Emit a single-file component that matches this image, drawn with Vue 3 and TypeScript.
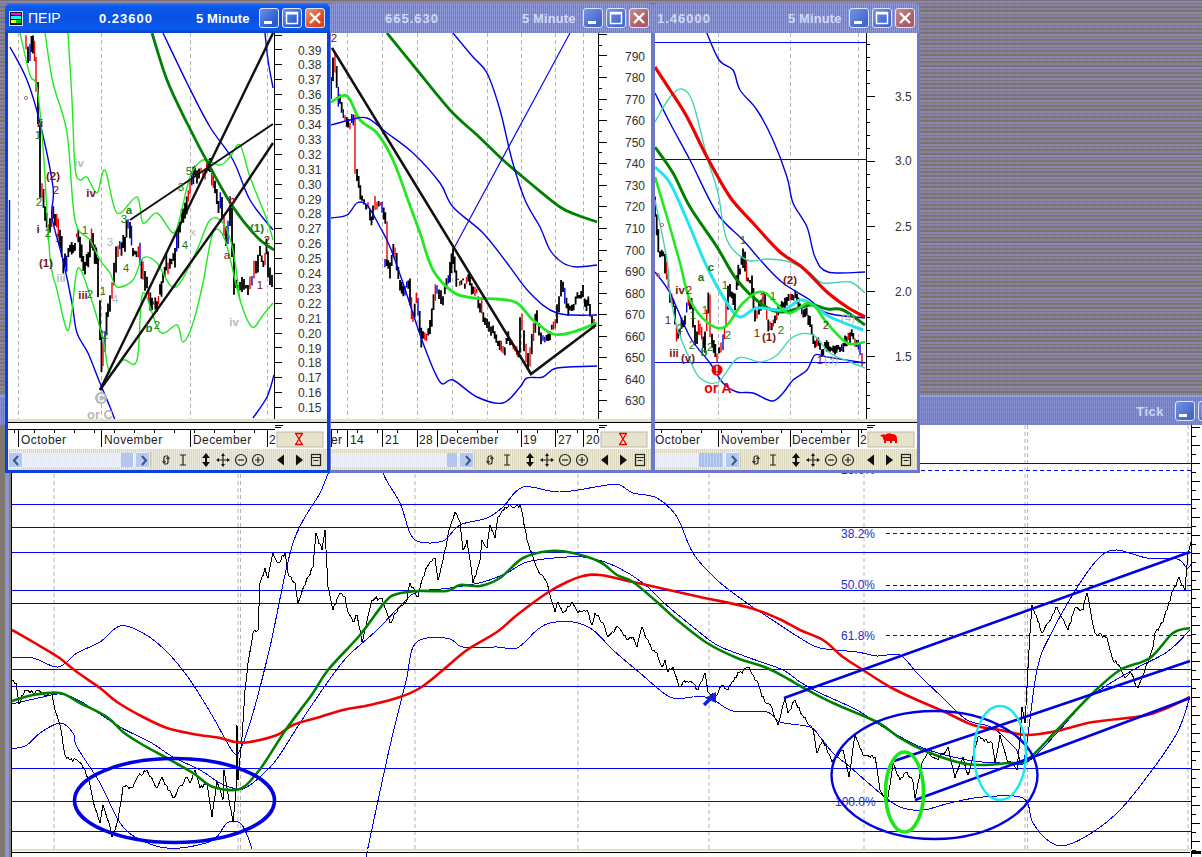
<script setup lang="ts">
type Pt = [number, number]
interface Curve { d: string; c: string; w: number }
interface Label { x: number; y: number; t: string; k: string }
interface Date2 { x: number; t: string; tx: number }
interface Tick { y: number; len: number }
interface AxisLabel { y: number; t: string }
interface Win {
  id: string; left: number; inner: number; axis: number; labelX: number; name: string; price: string
  curves: Curve[]; vgrid: number[]; hlines: number[]; ticks: Tick[]; labels: AxisLabel[]; dates: Date2[]
  texts: Label[]; candles: { black: string; red: string; blue: string }; rings: { x: number; y: number }[]
  boxX: number; badge: string; hasLeft: boolean; blobs: { x: number; y: number; r: number; c: string; t: string }[]
}

const parse = (s: string): Pt[] => s.trim().split(/\s+/).map(p => { const [a, b] = p.split(',').map(Number); return [a, b] as Pt })

function curve(s: string): string {
  const p = parse(s)
  let d = `M${p[0][0]} ${p[0][1]}`
  for (let i = 0; i < p.length - 1; i++) {
    const a = p[Math.max(i - 1, 0)], b = p[i], c = p[i + 1], e = p[Math.min(i + 2, p.length - 1)]
    const c1x = b[0] + (c[0] - a[0]) / 6, c1y = b[1] + (c[1] - a[1]) / 6
    const c2x = c[0] - (e[0] - b[0]) / 6, c2y = c[1] - (e[1] - b[1]) / 6
    d += `C${c1x.toFixed(1)} ${c1y.toFixed(1)} ${c2x.toFixed(1)} ${c2y.toFixed(1)} ${c[0]} ${c[1]}`
  }
  return d
}

function rng(seed: number) {
  let s = seed
  return () => { s = (s * 1664525 + 1013904223) % 4294967296; return s / 4294967296 }
}

function jag(s: string, step: number, amp: number): string {
  const p = parse(s), r = rng(7)
  let d = `M${p[0][0]} ${p[0][1]}`
  for (let i = 0; i < p.length - 1; i++) {
    const [x0, y0] = p[i], [x1, y1] = p[i + 1]
    const n = Math.max(1, Math.round(Math.abs(x1 - x0) / step))
    for (let k = 1; k <= n; k++) {
      const t = k / n
      const o = k === n ? 0 : (r() - 0.5) * amp * 2
      d += `L${(x0 + (x1 - x0) * t).toFixed(1)} ${(y0 + (y1 - y0) * t + o).toFixed(1)}`
    }
  }
  return d
}

function candleSet(s: string, step: number, range: number, seed: number) {
  const p = parse(s), r = rng(seed)
  let black = '', red = '', blue = ''
  for (let i = 0; i < p.length - 1; i++) {
    const [x0, y0] = p[i], [x1, y1] = p[i + 1]
    const n = Math.max(1, Math.round(Math.abs(x1 - x0) / step))
    for (let k = 0; k < n; k++) {
      const t = k / n
      const x = (x0 + (x1 - x0) * t).toFixed(1)
      const j = (r() - 0.5) * range * 1.6
      const y = y0 + (y1 - y0) * t + j
      const nextY = y0 + (y1 - y0) * ((k + 1) / n) + j
      const top = Math.min(y, nextY) - r() * range
      const bot = Math.max(y, nextY) + r() * range
      const seg = `M${x} ${top.toFixed(1)}V${bot.toFixed(1)}`
      const q = r()
      if (q < 0.2) red += seg
      else if (q < 0.3) blue += seg
      else black += seg
    }
  }
  return { black, red, blue }
}

const lbl = (s: string): Label[] =>
  s.trim().split(';').map(e => {
    const [xy, t, k] = e.trim().split('|')
    const [x, y] = xy.split(',').map(Number)
    return { x, y, t, k }
  })

const DG = '#008000', LG = '#22e822', BL = '#0000e8', RD = '#f00000', CY = '#22e4f0', TL = '#44d4b4'

const w1: Win = {
  id: 'w1', left: 8, inner: 319, axis: 274, labelX: 298, name: 'ΠΕΙΡ', price: '0.23600', hasLeft: true,
  boxX: 277, badge: 'hour',
  vgrid: [18.5, 101.5, 190.5, 267.5], hlines: [],
  ticks: Array.from({ length: 26 }, (_, i) => ({ y: 35 + i * 14.9, len: 8 })),
  labels: Array.from({ length: 25 }, (_, i) => ({ y: 50 + i * 14.9, t: (0.39 - i * 0.01).toFixed(2) })),
  dates: [{ x: 18.5, t: 'October', tx: 21 }, { x: 101.5, t: 'November', tx: 104 }, { x: 190.5, t: 'December', tx: 193 }, { x: 267.5, t: '2', tx: 269 }],
  curves: [
    { c: BL, w: 1.4, d: curve('10,47 27,80 40,123 53,187 52,217 63,260 72,303 77,333 88,353 100,383 110,407 115,420') },
    { c: BL, w: 1.4, d: curve('163,33 187,83 210,127 233,160 250,200 273,230') },
    { c: BL, w: 1.4, d: curve('265,33 268,60 273,88') },
    { c: BL, w: 1.4, d: curve('253,418 267,397 274,375') },
    { c: BL, w: 1.4, d: 'M9.5 200V250' },
    { c: LG, w: 1.4, d: curve('45,33 53,83 67,133 75,220 90,240 100,260 110,273 117,287 133,280 143,258 157,263 170,285 180,283 197,250 210,220 223,223 233,250 240,300') },
    { c: LG, w: 1.4, d: curve('68,33 72,100 75,167 80,180 87,177 97,193 105,170 117,213 137,197 143,223 157,213 173,233 180,217 190,177 203,160 220,165 230,157 240,145 250,177 267,220 273,240') },
    { c: LG, w: 1.4, d: curve('20,33 30,75 37,87 43,147 50,257 57,290 67,330 72,310 78,268 90,295 103,340 110,373 123,360 137,360 143,293 160,332 177,325 183,342 193,323 203,283 213,233 225,240 240,300 252,327 263,315 273,303') },
    { c: DG, w: 2.8, d: curve('152,33 167,80 187,123 210,167 233,207 257,237 274,250') },
    { c: '#111', w: 2.4, d: 'M100 390L273 33' },
    { c: '#111', w: 2.4, d: 'M100 390L233 203L273 143' },
    { c: '#111', w: 2, d: 'M130 220L273 124' },
  ],
  candles: candleSet('26,40 30,60 33,40 36,60 40,120 42,190 45,205 50,235 55,215 60,235 65,265 70,250 75,245 80,235 85,270 90,255 93,230 98,265 100,300 103,370 105,350 108,315 112,295 118,250 125,245 128,225 130,225 133,245 140,250 143,268 147,285 152,300 157,305 160,295 163,285 168,265 175,260 180,225 185,215 190,190 195,170 205,175 210,165 215,190 222,205 228,240 232,210 236,290 238,285 242,290 250,285 258,265 260,255 265,260 268,250 272,280 274,285', 2, 7, 11),
  rings: [{ x: 26, y: 98 }],
  blobs: [{ x: 101, y: 398, r: 6, c: '#b8b8b8', t: 'C' }],
  texts: lbl('40,127|ii|mb;38,139|1|g;53,180|(2)|mb;39,206|2|g;79,167|iv|sb;91,197|iv|mb;56,194|2|m;38,233|i|mb;48,237|2|g;58,242|1|m;46,267|(1)|mb;61,282|iii|sb;83,299|iii|mb;90,298|2|g;103,295|1|g;85,234|1|g;110,246|3|s;124,223|3|g;129,214|a|gb;126,272|4|g;115,303|4|s;185,249|4|g;105,339|2|g;149,332|b|gb;157,329|2|g;193,236|x|s;189,175|5|g;181,191|3|g;257,232|(1)|gb;267,244|2|m;227,259|a|m;260,289|1|m;234,326|iv|sb;232,204|b|mb;100,419|or C|sb2'),
}

const w2: Win = {
  id: 'w2', left: 331, inner: 320, axis: 598, labelX: 625, name: '', price: '665.630', hasLeft: false,
  boxX: 601, badge: 'hour',
  vgrid: [347.5, 382.5, 417.5, 452.5, 487.5, 521.5, 555.5, 583.5], hlines: [],
  ticks: Array.from({ length: 36 }, (_, i) => ({ y: 34.4 + i * 10.78, len: i % 2 === 0 ? 9 : 4 })).filter(t => t.y < 420),
  labels: Array.from({ length: 17 }, (_, i) => ({ y: 56 + i * 21.56, t: String(790 - i * 10) })),
  dates: [{ x: 347.5, t: '14', tx: 350 }, { x: 382.5, t: '21', tx: 385 }, { x: 417.5, t: '28', tx: 419 }, { x: 437.5, t: 'December', tx: 440 }, { x: 521.5, t: '19', tx: 523 }, { x: 555.5, t: '27', tx: 558 }, { x: 583.5, t: '20', tx: 586 }, { x: 331, t: 'er', tx: 331 }],
  curves: [
    { c: DG, w: 2.8, d: curve('387,33 413,65 450,110 477,135 503,160 530,183 560,207 577,215 597,222') },
    { c: LG, w: 2.8, d: curve('331,102 347,96 360,120 377,133 393,160 408,200 420,233 433,270 453,292 473,298 497,299 517,303 533,320 553,334 573,332 597,323') },
    { c: BL, w: 1.4, d: curve('453,33 473,57 487,73 500,110 512,160 525,200 540,227 550,250 563,263 577,267 597,265') },
    { c: BL, w: 1.4, d: curve('331,125 350,120 367,118 387,133 413,153 440,183 453,207 483,233 507,263 530,293 557,313 597,315') },
    { c: BL, w: 1.4, d: curve('331,218 347,215 357,203 367,205 380,227 390,247 403,283 423,343 440,382 453,380 477,397 503,403 520,387 527,378 543,377 557,368 597,366') },
    { c: BL, w: 1.1, d: 'M453 250L570 33' },
    { c: '#111', w: 2.6, d: 'M332 48L531 374L596 325' },
  ],
  candles: candleSet('331,100 335,60 340,100 345,115 350,125 355,115 357,170 362,195 370,210 373,220 377,200 382,205 387,225 385,260 390,270 395,250 400,280 405,295 410,280 413,320 418,300 423,340 430,330 437,287 443,300 450,280 453,253 458,283 470,280 480,300 485,317 493,330 503,350 510,337 520,353 522,320 530,367 537,315 543,340 550,337 557,320 563,283 570,313 583,293 590,307 596,328', 1.8, 5, 21),
  rings: [], blobs: [],
  texts: lbl('334,42|2|m'),
}

const w3: Win = {
  id: 'w3', left: 655, inner: 262, axis: 866, labelX: 895, name: '', price: '1.46000', hasLeft: false,
  boxX: 868, badge: 'sheep',
  vgrid: [718.5, 790.5, 858.5], hlines: [42, 159, 362],
  ticks: Array.from({ length: 31 }, (_, i) => ({ y: 31 + i * 13, len: i % 5 === 0 ? 9 : 4 })),
  labels: [96, 160, 226, 291, 356].map((y, i) => ({ y, t: (3.5 - i * 0.5).toFixed(1) })),
  dates: [{ x: 654.5, t: 'October', tx: 655 }, { x: 718.5, t: 'November', tx: 721 }, { x: 790.5, t: 'December', tx: 792 }, { x: 858.5, t: '2', tx: 860 }],
  curves: [
    { c: BL, w: 1.4, d: curve('706,31 719,60 733,70 740,90 757,110 773,140 787,177 793,203 807,227 815,257 828,272 865,272') },
    { c: BL, w: 1.4, d: curve('655,93 670,123 690,160 717,213 743,240 763,263 783,283 810,300 827,313 865,318') },
    { c: BL, w: 1.4, d: curve('655,272 670,293 690,337 710,363 723,383 737,392 753,393 772,401 783,393 793,380 807,370 815,355 827,357 865,363') },
    { c: TL, w: 1.4, d: curve('655,122 670,97 682,89 693,103 707,157 718,193 727,240 747,260 767,259 790,262 810,273 823,283 850,282 865,293') },
    { c: TL, w: 1.4, d: curve('655,200 667,260 670,293 677,327 690,360 700,378 718,382 738,358 760,362 777,355 793,337 813,335 830,353 850,362 865,368') },
    { c: RD, w: 3.2, d: curve('655,67 670,90 687,117 707,157 730,197 753,223 780,252 803,268 827,292 847,307 865,317') },
    { c: DG, w: 3, d: curve('655,147 673,173 690,207 717,247 737,280 763,305 783,312 810,305 827,309 843,310 865,325') },
    { c: CY, w: 3, d: curve('655,167 670,183 687,220 707,267 727,303 740,317 757,308 783,310 800,300 813,305 830,317 863,330') },
    { c: LG, w: 2.6, d: curve('655,177 667,217 680,263 690,300 708,323 725,327 743,303 763,292 788,313 810,303 827,323 847,343 865,342') },
  ],
  candles: candleSet('655,200 660,250 665,255 670,290 675,310 678,340 685,320 690,300 693,310 697,340 700,325 705,345 710,300 712,340 717,355 723,345 726,325 730,290 735,305 740,270 743,265 745,250 748,280 752,280 755,310 757,320 765,300 770,330 775,325 780,310 785,305 792,295 797,295 800,305 805,310 810,320 815,340 820,345 825,352 830,345 835,350 840,345 845,345 850,335 855,340 860,345 864,360', 1.8, 5, 33),
  rings: [{ x: 662, y: 225 }, { x: 658, y: 275 }],
  blobs: [{ x: 717, y: 370, r: 5.5, c: '#f00000', t: '!' }],
  texts: lbl('689,294|2|m;680,294|iv|mb;668,324|1|m;680,332|2|g;674,357|iii|mb;688,362|(v)|mb;692,349|2|g;704,356|b|gb;710,351|2|g;701,281|a|gb;711,271|c|gb;693,319|1|g;705,314|1|g;725,289|1|g;743,244|1|g;763,301|2|m;773,300|1|g;757,337|1|m;769,341|(1)|mb;781,334|2|g;790,284|(2)|mb;826,329|2|m;848,322|(4)|s;820,364|1|m;831,364|(3)|s;728,339|2|g;718,393|or A|rb'),
}

const wins: Win[] = [w2, w3, w1]

const mainH = [463, 504, 527, 552, 590, 603, 669, 686, 768, 801, 831]
const mainDash = [470, 533, 584.5, 635]
const mainGrid = [54, 238, 240.5, 415, 578, 709, 864, 1025, 1027.5, 1188]
const mainPct = [
  { x: 841, y: 474, t: '23.6%' }, { x: 841, y: 538, t: '38.2%' }, { x: 841, y: 589, t: '50.0%' },
  { x: 841, y: 640, t: '61.8%' }, { x: 835, y: 806, t: '100.0%' },
]
const mainThin = [
  curve('12,658 33,658 58,667 77,653 100,642 120,626 143,633 167,652 190,680 213,717 233,752 240,750 253,713 270,647 293,543 320,493 330,470 355,430'),
  curve('372,430 383,473 400,503 410,533 420,542 443,541 460,525 487,518 503,507 523,487 560,492 607,485 620,485 633,493 657,498 677,517 693,553 717,580 747,603 777,623 800,638 820,648 857,652 877,656 900,655 917,673 943,698 967,720 993,728 1015,748 1024,760 1037,670 1053,630 1080,583 1100,557 1117,550 1147,558 1177,559 1187,568 1192,563'),
  curve('12,704 43,697 60,694 80,701 120,727 150,742 173,757 200,770 220,783 237,789 247,787 262,775 277,759 300,723 327,683 347,657 377,630 403,603 417,592 450,588 483,582 507,573 527,562 567,557 590,558 617,567 643,583 663,602 693,627 717,645 747,657 783,670 800,682 820,693 857,710 883,727 923,748 967,760 1000,763 1027,762 1057,733 1090,697 1133,670 1167,652 1190,630'),
  curve('12,749 27,745 40,733 60,723 73,733 77,747 100,783 123,827 153,845 180,848 213,840 227,823 240,823 248,837 252,850'),
  curve('366,857 387,759 402,697 407,677 413,647 427,638 450,639 463,647 497,647 517,648 537,630 550,623 573,622 593,630 613,650 640,673 670,697 693,697 710,698 733,711 767,712 780,722 810,727 820,737 833,753 850,767 880,793 900,807 923,810 950,803 983,797 1023,798 1033,823 1050,842 1067,845 1093,832 1120,810 1150,773 1177,733 1190,697'),
]
const mainPrice = jag('12,680 16,683 19,704 25,690 30,693 38,690 44,695 52,693 55,710 60,725 65,755 70,760 77,760 85,770 90,785 95,808 100,823 103,805 110,827 112,837 118,820 123,787 133,787 137,778 147,770 157,788 162,777 173,798 187,777 190,783 195,770 200,788 207,783 212,817 217,782 223,800 224,770 233,822 236,790 237,725 238,780 242,737 245,690 248,663 253,633 258,630 260,583 265,568 268,578 273,553 278,563 285,553 288,573 295,583 298,603 305,585 313,567 316,533 322,550 325,530 328,587 333,610 340,593 345,597 348,612 353,622 357,615 362,642 372,600 382,598 390,623 400,607 407,600 410,583 418,597 423,577 427,567 435,558 438,580 443,560 450,527 455,512 460,522 463,550 467,540 473,583 480,560 482,540 487,548 490,525 495,538 498,517 505,507 520,505 523,517 527,540 533,557 538,570 547,583 555,612 558,602 563,613 572,602 578,613 587,610 592,625 595,613 603,623 608,637 618,627 628,640 633,637 637,647 642,627 652,650 657,653 662,667 665,660 668,672 673,667 679,687 683,682 693,683 698,690 705,673 708,692 715,697 723,685 728,690 735,677 748,667 758,683 762,697 772,708 778,725 785,698 788,713 795,700 802,715 813,730 817,753 823,740 832,762 843,750 849,777 855,735 863,755 875,757 880,790 887,805 893,763 900,780 907,772 913,782 915,798 922,763 928,752 938,760 948,747 955,778 963,757 968,775 978,737 992,743 995,763 1000,735 1007,760 1017,770 1020,740 1022,707 1025,723 1030,633 1032,605 1042,633 1057,607 1068,630 1075,608 1083,610 1087,593 1095,633 1107,638 1113,660 1120,667 1125,678 1130,672 1138,688 1145,670 1153,647 1155,633 1163,622 1173,590 1179,577 1185,590 1188,553 1192,538', 1.5, 2)
const mainRed = curve('12,630 33,642 58,657 77,672 100,688 117,702 143,717 167,728 193,734 220,738 235,742 250,742 277,735 293,725 320,717 343,710 370,705 400,697 420,688 443,670 467,650 497,632 517,615 547,593 567,582 583,576 600,575 633,582 660,588 700,597 747,607 777,618 800,630 823,640 843,657 863,670 890,687 917,700 943,711 973,725 1000,730 1027,735 1057,731 1093,722 1143,716 1167,708 1190,697')
const mainGreen = curve('12,701 33,695 60,693 80,703 107,717 123,732 143,745 167,758 193,773 213,787 240,789 257,773 267,759 287,728 313,693 328,670 360,635 385,602 397,594 419,591 447,591 460,585 480,586 500,578 523,558 550,551 573,553 600,562 617,575 633,582 657,602 677,620 707,643 737,658 767,668 790,680 800,686 833,703 877,722 900,738 923,750 957,762 980,765 1007,763 1027,760 1057,730 1093,693 1120,670 1150,658 1173,633 1190,628')
const mainTicks = Array.from({ length: 48 }, (_, i) => ({ y: 427 + i * 9, len: i % 2 === 0 ? 9 : 5 }))
const lineD = (xs: number[], a: number, b: number) => xs.map(x => `M${x} ${a}V${b}`).join('')
const hlineD = (ys: number[], a: number, b: number) => ys.map(y => `M${a} ${y + 0.5}H${b}`).join('')
const dateTicks = (w: Win) => {
  const a: number[] = []
  for (let x = w.left + 6; x < w.axis; x += 20) a.push(Math.floor(x) + 0.5)
  return lineD(a, 429, 433)
}
const toolIcons = ['cycle', 'ibeam', 'updown', 'move', 'minus', 'plus', 'left', 'right', 'doc']
</script>

<template>
  <main class="desk">
    <section class="big">
      <header class="big-title">
        <span class="tick-name">Tick</span>
        <span class="btn blue dim"><svg viewBox="0 0 20 20" width="20" height="20"><rect x="4" y="13" width="8" height="3" fill="#fff" /></svg></span>
        <span class="btn blue dim"><svg viewBox="0 0 20 20" width="20" height="20"><rect x="4.5" y="4.5" width="11" height="11" fill="none" stroke="#fff" stroke-width="1.5" /></svg></span>
      </header>
      <div class="big-body">
        <div class="strip"></div>
        <svg class="big-chart" viewBox="12 425 1190 432" width="1190" height="432">
          <path :d="lineD(mainGrid, 425, 852)" class="grid" />
          <path :d="hlineD(mainH, 12, 1191)" class="h" />
          <path :d="hlineD(mainDash, 886, 1191)" class="hd" />
          <text v-for="p in mainPct" :key="p.t" :x="p.x" :y="p.y" class="pct">{{ p.t }}</text>
          <path v-for="(d, i) in mainThin" :key="i" :d="d" class="thin" />
          <path :d="mainPrice" class="price" />
          <path :d="mainRed" class="ma red" />
          <path :d="mainGreen" class="ma green" />
          <path d="M784 698L1190 552" class="chan" />
          <path d="M894 761L1025 717L1190 661" class="chan" />
          <path d="M915 800L1033 757L1190 698" class="chan" />
          <ellipse cx="174.5" cy="800.5" rx="100" ry="42" class="ring r-blue" />
          <ellipse cx="934.5" cy="775" rx="103" ry="64" class="ring r-blue2" />
          <ellipse cx="904.5" cy="792" rx="19" ry="40" class="ring r-green" />
          <ellipse cx="1000" cy="753" rx="26" ry="47" class="ring r-cyan" />
          <path d="M704 705L711 698" class="arrow-stem" />
          <polygon points="716,692 716,703 705,698" class="arrow-head" />
          <path d="M1191.5 425V857" class="axis" />
          <path v-for="t in mainTicks" :key="t.y" :d="`M1191 ${t.y}h${t.len}`" class="axis" />
          <rect x="12" y="849" width="1180" height="2" class="pale" />
          <path d="M12 852.5H1190" class="axis" />
          <path d="M1191 852.5h10" class="axis2" />
        </svg>
      </div>
    </section>

    <section v-for="w in wins" :key="w.id" class="win" :class="w.id">
      <header class="title">
        <svg v-if="w.name" class="app-ico" viewBox="0 0 14 15" width="14" height="15">
          <rect x="0.5" y="0.5" width="13" height="14" fill="#111" stroke="#ddd" />
          <rect x="2" y="2" width="10" height="2" fill="#f0f" />
          <rect x="2" y="5" width="10" height="3" fill="#0ff" />
          <rect x="2" y="9" width="5" height="3" fill="#ff0" />
          <rect x="7" y="9" width="5" height="3" fill="#0c0" />
        </svg>
        <span v-if="w.name" class="name">{{ w.name }}</span>
        <span class="val">{{ w.price }}</span>
        <span class="mins">5 Minute</span>
        <span class="btns">
          <span class="btn blue"><svg viewBox="0 0 20 20" width="20" height="20"><rect x="5" y="13" width="8" height="3" fill="#fff" /></svg></span>
          <span class="btn blue"><svg viewBox="0 0 20 20" width="20" height="20"><rect x="4.5" y="4.5" width="11" height="11" fill="none" stroke="#fff" stroke-width="1.5" /><path d="M4 5.5h12" stroke="#fff" stroke-width="2" /></svg></span>
          <span class="btn close"><svg viewBox="0 0 20 20" width="20" height="20"><path d="M5 5l10 10M15 5L5 15" stroke="#fff" stroke-width="2.4" /></svg></span>
        </span>
      </header>
      <div class="client">
        <svg class="chart" :viewBox="`${w.left} 33 ${w.inner} 416`" :width="w.inner" height="416">
          <defs>
            <clipPath :id="`clip-${w.id}`"><rect :x="w.left" y="33" :width="w.axis - w.left" height="387" /></clipPath>
          </defs>
          <g :clip-path="`url(#clip-${w.id})`">
            <path :d="lineD(w.vgrid, 33, 420)" class="grid" />
            <path :d="hlineD(w.hlines, w.left, w.axis)" class="h" />
            <path :d="w.candles.black" class="c-black" />
            <path :d="w.candles.blue" class="c-blue" />
            <path :d="w.candles.red" class="c-red" />
            <path v-for="(c, i) in w.curves" :key="i" :d="c.d" fill="none" :stroke="c.c" :stroke-width="c.w" />
            <circle v-for="(r, i) in w.rings" :key="i" :cx="r.x" :cy="r.y" r="1.6" class="small-ring" />
            <g v-for="(b, i) in w.blobs" :key="i">
              <circle :cx="b.x" :cy="b.y" :r="b.r" :fill="b.c" />
              <text :x="b.x" :y="b.y + 3.5" class="blob-t">{{ b.t }}</text>
            </g>
            <text v-for="(t, i) in w.texts" :key="i" :x="t.x" :y="t.y" class="lab" :class="t.k">{{ t.t }}</text>
          </g>
          <path :d="`M${w.axis + 0.5} 33V420`" class="axis" />
          <path v-for="t in w.ticks" :key="t.y" :d="`M${w.axis} ${t.y}h${t.len}`" class="axis" />
          <text v-for="l in w.labels" :key="l.t" :x="w.labelX" :y="l.y + 4.5" class="ax-l">{{ l.t }}</text>
          <rect :x="w.left" y="419" :width="w.inner" height="3" class="pale" />
          <path :d="`M${w.left} 422.5H${w.left + w.inner}`" class="axis" />
          <path :d="`M${w.left} 429.5H${w.axis + 1}`" class="axis" />
          <path :d="`M${w.axis + 1} 425.5h8M${w.axis + 1} 427.5h6`" class="axis" />
          <path :d="dateTicks(w)" class="axis" />
          <path :d="lineD(w.dates.map(d => d.x), 429, 447)" class="axis" />
          <text v-for="d in w.dates" :key="d.t" :x="d.tx" y="444" class="date">{{ d.t }}</text>
          <rect :x="w.boxX" y="432" width="46" height="15" class="badge" />
          <g v-if="w.badge === 'hour'" :transform="`translate(${w.boxX + 22} 433)`">
            <path d="M-4 .5H4M-4 11.5H4M-3 1L3 11M3 1L-3 11" class="hourglass" />
          </g>
          <g v-else :transform="`translate(${w.boxX + 20} 433)`">
            <path d="M-8 3Q-5 0-3 2Q0-1 4 1Q9 1 9 6V10H7V8L4 8V10H2V8H-2V10H-4V7Q-6 6-5 4Z" class="sheep" />
          </g>
        </svg>
        <div class="toolbar">
          <div class="scroll">
            <span v-if="w.hasLeft" class="sbtn"><svg viewBox="0 0 15 15" width="15" height="15"><path d="M9 3L5 7.5L9 12" class="chev" /></svg></span>
            <span class="track"><span class="thumb"></span></span>
            <span class="sbtn"><svg viewBox="0 0 15 15" width="15" height="15"><path d="M6 3L10 7.5L6 12" class="chev" /></svg></span>
          </div>
          <div class="tools">
            <span v-for="t in toolIcons" :key="t" class="tool" :class="`t-${t}`">
              <svg viewBox="0 0 16 16" width="16" height="16">
                <g v-if="t === 'cycle'" class="ico-line"><path d="M10 4H7.5Q6 4 6 6V10" /><path d="M6 12H8.5Q10 12 10 10V6" /><path d="M4.5 9L6 11L7.5 9M8.5 7L10 5L11.5 7" /></g>
                <path v-else-if="t === 'ibeam'" d="M5 3H11M5 13H11M8 3V13" class="ico-line" />
                <g v-else-if="t === 'updown'"><polygon points="8,1 12,6 4,6" /><polygon points="8,15 12,10 4,10" /><rect x="7" y="5" width="2" height="6" /></g>
                <g v-else-if="t === 'move'"><path d="M8 3V13M3 8H13" class="ico-line" /><polygon points="8,1 10,4 6,4" /><polygon points="8,15 10,12 6,12" /><polygon points="1,8 4,6 4,10" /><polygon points="15,8 12,6 12,10" /></g>
                <g v-else-if="t === 'minus'" class="ico-line"><circle cx="8" cy="8" r="5.5" /><path d="M5 8H11" /></g>
                <g v-else-if="t === 'plus'" class="ico-line"><circle cx="8" cy="8" r="5.5" /><path d="M5 8H11M8 5V11" /></g>
                <polygon v-else-if="t === 'left'" points="4,8 11,2.5 11,13.5" />
                <polygon v-else-if="t === 'right'" points="12,8 5,2.5 5,13.5" />
                <g v-else class="ico-line"><rect x="3.5" y="2.5" width="9" height="11" /><path d="M3.5 5.5H12.5M5.5 8.5H10.5" /></g>
              </svg>
            </span>
          </div>
        </div>
      </div>
    </section>
  </main>
</template>

<style scoped>
.desk {
  position: relative;
  width: 1202px;
  height: 857px;
  overflow: hidden;
  font-family: "Liberation Sans", Arial, sans-serif;
  background:
    repeating-linear-gradient(90deg, rgba(150, 130, 190, .4) 0 1px, rgba(125, 135, 70, .4) 1px 2px),
    repeating-linear-gradient(0deg, #868686 0 2px, #6e7248 2px 4px, #86829c 4px 6px, #74724e 6px 7px, #8e8ea0 7px 9px, #6c6c4c 9px 11px);
}
.big { position: absolute; left: 0; top: 395px; width: 1202px; height: 462px; display: flex; flex-direction: column; }
.big-title {
  height: 30px; display: flex; align-items: center; justify-content: flex-end; gap: 3px; padding-right: 0; margin-right: -16px;
  border-top: 2px solid #8e9ce0; box-sizing: border-box;
  background:
    repeating-linear-gradient(90deg, rgba(150, 160, 220, .5) 0 1px, rgba(110, 120, 170, .5) 1px 2px),
    repeating-linear-gradient(0deg, #6f7bc2 0 2px, #8289c4 2px 3px, #7480c8 3px 5px);
}
.tick-name { color: #d0d6f2; font-size: 13px; font-weight: 700; margin-right: 8px; letter-spacing: .5px; }
.big-body { flex: 1; display: flex; min-height: 0; }
.strip {
  flex: none; border-right: 1px solid #000; box-sizing: border-box; width: 12px;
  background: linear-gradient(90deg, #80786e 0 5px, #8a96cc 5px 9px, #8a8270 9px 11px);
}
.big-chart { background: #fff; display: block; flex: none; }
.grid { stroke: #b4b4b4; stroke-width: 1; stroke-dasharray: 4 3; fill: none; }
.h { stroke: #0000ee; stroke-width: 1; fill: none; shape-rendering: crispEdges; }
.hd { stroke: #0000ee; stroke-width: 1; stroke-dasharray: 4 3; fill: none; shape-rendering: crispEdges; }
.pct { fill: #2030d0; font-size: 12px; }
.thin { fill: none; stroke: #0000ee; stroke-width: 1; shape-rendering: crispEdges; }
.price { fill: none; stroke: #000; stroke-width: 1; shape-rendering: crispEdges; }
.ma { fill: none; stroke-width: 2.6; }
.red { stroke: #f00000; }
.green { stroke: #008000; }
.chan { fill: none; stroke: #0000e0; stroke-width: 2.6; }
.ring { fill: none; }
.r-blue { stroke: #0000e0; stroke-width: 3.6; }
.r-blue2 { stroke: #0000e0; stroke-width: 2.4; }
.r-green { stroke: #18e818; stroke-width: 3.6; }
.r-cyan { stroke: #18e8f0; stroke-width: 2.4; }
.arrow-stem { stroke: #1020e0; stroke-width: 3.5; fill: none; }
.arrow-head { fill: #1020e0; }
.axis { stroke: #000; stroke-width: 1; fill: none; shape-rendering: crispEdges; }
.axis2 { stroke: #000; stroke-width: 3; fill: none; shape-rendering: crispEdges; }
.pale { fill: #e4e0c4; }

.win { position: absolute; top: 3px; height: 470px; box-sizing: border-box; display: flex; flex-direction: column; border: 3px solid #6c78cc; border-top: 0; border-radius: 7px 7px 0 0; }
.w1 { left: 5px; width: 325px; z-index: 4; border-color: #0a3fe0; }
.w2 { left: 328px; width: 326px; z-index: 2; }
.w3 { left: 652px; width: 268px; z-index: 3; }
.title {
  height: 30px; flex: none; display: flex; align-items: center; margin: 0 -3px; padding: 0 5px 0 4px; box-sizing: border-box;
  border-radius: 7px 7px 0 0; color: #d2d8f4; font-size: 13px; font-weight: 700; letter-spacing: 1px;
  background:
    repeating-linear-gradient(90deg, rgba(165, 175, 230, .5) 0 1px, rgba(105, 115, 175, .5) 1px 2px),
    repeating-linear-gradient(0deg, #7482cc 0 2px, #8a90c8 2px 3px, #7a88d4 3px 5px);
}
.w1 .title { color: #fff; background: linear-gradient(#2a78f4, #0a58ea 12%, #0a50e2 55%, #0a5cf0 85%, #0840c8); }
.app-ico { flex: none; }
.name { margin-left: 5px; width: 26px; font-weight: 400; font-size: 14px; letter-spacing: 0; white-space: nowrap; }
.mins { letter-spacing: .1px; }
.w1 .val { margin-left: 45px; }
.w1 .mins { margin-left: 43px; }
.w2 .val { margin-left: 53px; }
.w2 .mins { margin-left: 83px; }
.w3 .val { margin-left: 1px; }
.w3 .mins { margin-left: 77px; }
.btns { margin-left: auto; display: flex; gap: 3px; }
.btn { width: 20px; height: 20px; display: block; border-radius: 3px; box-sizing: border-box; outline: 1px solid #dfe6f8; outline-offset: -1px; overflow: hidden; }
.btn svg { display: block; }
.blue { background: linear-gradient(135deg, #6f95ea, #2a58d0 75%); }
.close { background: linear-gradient(135deg, #f09a7a, #d8451e 70%); }
.w2 .blue, .w3 .blue, .dim { background: linear-gradient(135deg, #7898e4, #4468cc 75%); }
.w2 .close, .w3 .close { background: linear-gradient(135deg, #c89090, #a85c66 70%); }
.client { flex: 1; background: #fff; display: flex; flex-direction: column; min-height: 0; }
.chart { display: block; flex: none; }
.c-black { stroke: #000; stroke-width: 1.8; fill: none; }
.c-blue { stroke: #0000e0; stroke-width: 1.4; fill: none; }
.c-red { stroke: #f00000; stroke-width: 1.4; fill: none; }
.small-ring { fill: none; stroke: #b06a7a; stroke-width: 1; }
.blob-t { fill: #fff; font-size: 10px; font-weight: 700; text-anchor: middle; }
.lab { font-size: 11.5px; text-anchor: middle; }
.m { fill: #7a1616; }
.mb { fill: #7a1616; font-weight: 700; }
.g { fill: #1a7a1a; }
.gb { fill: #1a7a1a; font-weight: 700; }
.s { fill: #b8b8b8; }
.sb { fill: #b8b8b8; font-weight: 700; }
.sb2 { fill: #b8b8b8; font-weight: 700; font-size: 13px; }
.rb { fill: #f00000; font-weight: 700; font-size: 14px; }
.ax-l { fill: #333; font-size: 12px; }
.date { fill: #222; font-size: 12px; letter-spacing: .4px; }
.badge { fill: #e6e2cc; stroke: #bdb9a4; stroke-width: 1; }
.hourglass { stroke: #f00000; stroke-width: 1.4; fill: none; }
.sheep { fill: #f00000; }
.toolbar {
  height: 21px; flex: none; display: flex; align-items: center;
  background:
    repeating-linear-gradient(90deg, rgba(255, 255, 255, .35) 0 1px, rgba(200, 195, 160, .35) 1px 2px),
    #e6e2cc;
}
.scroll { flex: 1; min-width: 0; height: 16px; display: flex; align-items: center; }
.sbtn { width: 15px; height: 16px; flex: none; background: #b4c8f0; border: 1px solid #e8eefc; box-sizing: border-box; border-radius: 2px; display: block; overflow: hidden; }
.sbtn svg { display: block; }
.chev { fill: none; stroke: #3a5488; stroke-width: 2; }
.track {
  flex: 1; height: 14px; display: flex; justify-content: flex-end; padding-right: 2px;
  background: repeating-linear-gradient(90deg, #f4f2e8 0 1px, #e6eaf6 1px 2px);
}
.thumb { width: 12px; background: #b4c6ee; border-radius: 1px; }
.w2 .thumb { width: 10px; }
.w3 .thumb { width: 24px; background: repeating-linear-gradient(90deg, #a8bfee 0 2px, #c2d2f4 2px 3px); }
.tools { flex: none; display: flex; align-items: center; padding: 0 3px 0 7px; border-left: 1px solid #c8c4ac; margin-left: 0; }
.tool { width: 16px; height: 16px; display: block; margin-left: 1px; }
.tool svg { display: block; fill: #111; }
.t-cycle { margin-left: 0; }
.t-updown, .t-left { margin-left: 7px; }
.t-minus, .t-right { margin-left: 2px; }
.ico-line { fill: none; stroke: #222; stroke-width: 1.2; }
</style>
